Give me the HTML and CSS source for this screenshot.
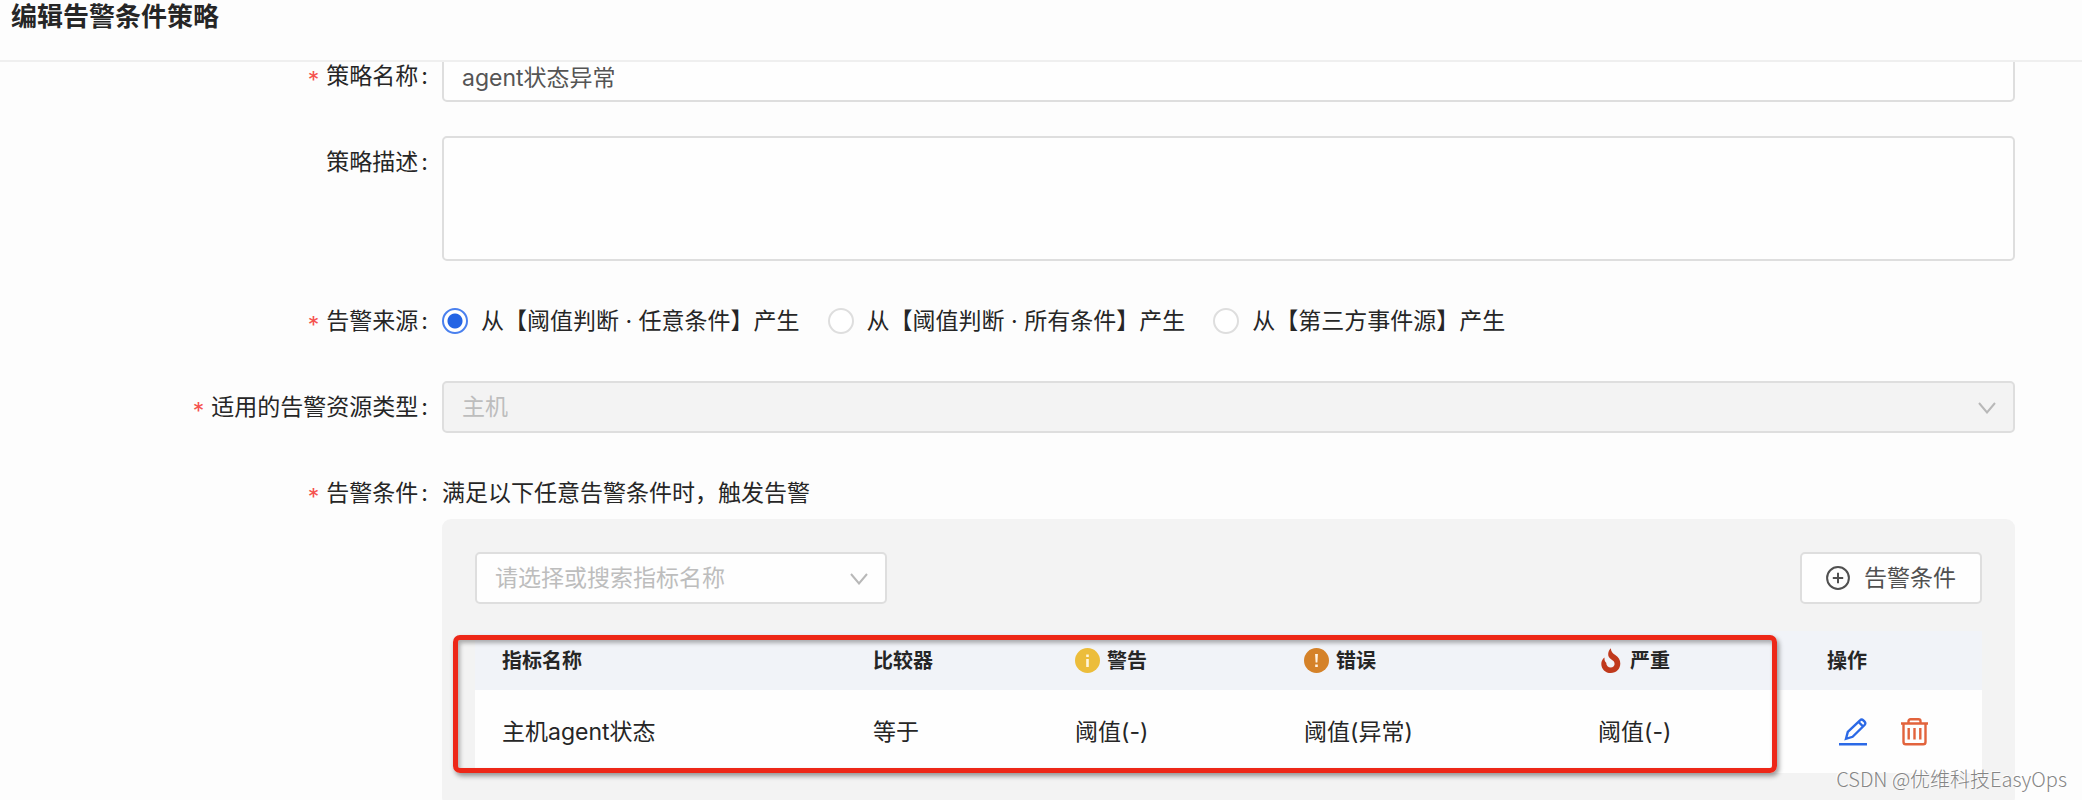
FILE: index.html
```html
<!DOCTYPE html>
<html lang="zh-CN">
<head>
<meta charset="utf-8">
<meta name="viewport" content="width=device-width, initial-scale=1">
<title>编辑告警条件策略</title>
<link rel="stylesheet" href="styles.css">
</head>
<body>
<header class="page-header">
  <h1 class="page-title">编辑告警条件策略</h1>
</header>
<main class="page-body">
  <form class="form">
    <div class="form-row">
      <label class="form-label required" for="name">策略名称</label>
      <input class="control" id="name" type="text" value="agent状态异常">
    </div>
    <div class="form-row">
      <label class="form-label" for="desc">策略描述</label>
      <textarea class="control control-area" id="desc"></textarea>
    </div>
    <div class="form-row" role="radiogroup" aria-labelledby="source-label">
      <span class="form-label required" id="source-label">告警来源</span>
      <div class="radio-group">
        <label class="radio"><input class="radio-input" type="radio" name="source" checked>从【阈值判断 · 任意条件】产生</label>
        <label class="radio"><input class="radio-input" type="radio" name="source">从【阈值判断 · 所有条件】产生</label>
        <label class="radio"><input class="radio-input" type="radio" name="source">从【第三方事件源】产生</label>
      </div>
    </div>
    <div class="form-row">
      <label class="form-label required" for="type">适用的告警资源类型</label>
      <div class="select">
        <select class="control" id="type" disabled><option>主机</option></select>
        <svg class="select-arrow" viewBox="0 0 18 12" aria-hidden="true"><path d="M1 1l8 9.500 8-9.500"/></svg>
      </div>
    </div>
    <div class="form-row">
      <span class="form-label required">告警条件</span>
      <div class="conditions">
        <p class="hint">满足以下任意告警条件时，触发告警</p>
        <section class="panel">
          <div class="toolbar">
            <div class="select metric-select">
              <select class="control placeholder" aria-label="指标名称"><option>请选择或搜索指标名称</option></select>
              <svg class="select-arrow" viewBox="0 0 18 12" aria-hidden="true"><path d="M1 1l8 9.500 8-9.500"/></svg>
            </div>
            <button class="add-button" type="button">
              <svg class="add-icon" viewBox="0 0 24 24" aria-hidden="true"><circle cx="12" cy="12" r="10.900"/><path d="M12 6.800v10.400M6.800 12h10.400"/></svg>
              告警条件
            </button>
          </div>
          <div class="table-wrap">
            <table class="table">
              <colgroup>
                <col class="col-name"><col class="col-op"><col class="col-warn"><col class="col-error"><col class="col-critical"><col class="col-actions">
              </colgroup>
              <thead>
                <tr>
                  <th>指标名称</th>
                  <th>比较器</th>
                  <th><span class="level"><svg class="level-icon" viewBox="0 0 25 25" aria-hidden="true"><circle cx="12.500" cy="12.500" r="12.500" fill="#ecbd3b"/><path fill="#fff6dc" d="M11.200 6.500h2.600v2.500h-2.600zM11.200 11h2.600v8h-2.600z"/></svg>警告</span></th>
                  <th><span class="level"><svg class="level-icon" viewBox="0 0 25 25" aria-hidden="true"><circle cx="12.500" cy="12.500" r="12.500" fill="#d58229"/><path fill="#fff3e2" d="M11.100 6h2.800l-.5 8.500h-1.800zM11.200 16.500h2.600v2.500h-2.600z"/></svg>错误</span></th>
                  <th><span class="level"><svg class="level-icon" viewBox="0 0 25 25" aria-hidden="true"><path fill="#c0391d" d="M12.800.2c.2 3.200 1.800 4.900 4.500 6.900 3.300 2.400 5 5 5 8.400 0 5.400-4.100 9.500-9.500 9.500S3.300 21 3.300 15.900c0-2.600 1-4.900 3.200-6.500-.1 2.500.3 4.200 1.700 5.300.1 3 2 4.800 4.500 4.800 2.200 0 3.900-1.600 3.900-3.500 0-2.300-1.300-3.300-3.200-4.500-2.300-1.400-3.400-3-3.200-5.700.2-2.300 1-4.200 2.600-5.600z"/></svg>严重</span></th>
                  <th>操作</th>
                </tr>
              </thead>
              <tbody>
                <tr>
                  <td>主机agent状态</td>
                  <td>等于</td>
                  <td>阈值(-)</td>
                  <td>阈值(异常)</td>
                  <td>阈值(-)</td>
                  <td>
                    <div class="actions">
                      <button class="icon-button edit" type="button" aria-label="编辑">
                        <svg viewBox="0 0 28 28" aria-hidden="true"><path d="M0 26.300h28M7 20.800l1.800-6.800L21 2.400c1-1 2.300-1 3.300 0l1.300 1.300c1 1 1 2.300 0 3.300L13.600 18.800zM19.600 4l4.600 4.600"/></svg>
                      </button>
                      <button class="icon-button delete" type="button" aria-label="删除">
                        <svg viewBox="0 0 28 28" aria-hidden="true"><path d="M0 5.500h27M7.500 5.500V3.200c0-1.200.8-1.900 2-1.900h8c1.200 0 2 .7 2 1.900v2.300M2.500 5.500v18.500c0 1.300.9 2.300 2.300 2.300h17.400c1.400 0 2.300-1 2.300-2.300V5.500M7.700 10v11.500M13.500 10v11.500M19.300 10v11.500"/></svg>
                      </button>
                    </div>
                  </td>
                </tr>
              </tbody>
            </table>
            <div class="highlight"></div>
          </div>
        </section>
      </div>
    </div>
  </form>
</main>
<div class="watermark">CSDN @优维科技EasyOps</div>
</body>
</html>
```
FILE: styles.css
```css
* {
  box-sizing: border-box;
}

body {
  margin: 0;
  height: 100vh;
  display: flex;
  flex-direction: column;
  overflow: hidden;
  background: #fdfdfd;
  color: #262626;
  font-family: Inter, "Noto Sans CJK SC", sans-serif;
  font-size: 23px;
  line-height: 32px;
}

.page-header {
  flex: none;
  padding: 0 11px 26px;
  border-bottom: 2px solid #efefef;
}

.page-title {
  margin: 0;
  font-size: 26px;
  font-weight: 600;
  line-height: 34px;
}

.page-body {
  flex: 1;
  min-height: 0;
  overflow: hidden;
}

/* The form is scrolled slightly under the header. */
.form {
  display: flex;
  flex-direction: column;
  gap: 34px;
  margin-top: -12px;
  padding-right: 67px;
}

.form-row {
  display: grid;
  grid-template-columns: 428px minmax(0, 1fr);
  column-gap: 14px;
  align-items: start;
}

.form-label {
  text-align: right;
  line-height: 52px;
}

.form-label::after {
  content: ":";
  margin-left: 3px;
}

.required::before {
  content: "*";
  margin-right: 7px;
  color: #f5524f;
  line-height: 1;
  vertical-align: -4px;
}

.control {
  display: block;
  width: 100%;
  height: 52px;
  padding: 0 18px;
  border: 2px solid #dedede;
  border-radius: 5px;
  background: #fefefe;
  color: #555;
  font: inherit;
  outline: none;
  appearance: none;
}

.control-area {
  height: 125px;
  padding: 8px 18px;
  resize: none;
}

.control:disabled {
  background: #f3f3f3;
  color: #bdbdbd;
  opacity: 1;
}

.placeholder {
  color: #bdbdbd;
}

.select {
  position: relative;
}

.select-arrow {
  position: absolute;
  top: 21px;
  right: 19px;
  width: 18px;
  height: 12px;
  fill: none;
  stroke: #b8b8b8;
  stroke-width: 2;
  pointer-events: none;
}

.radio-group {
  display: flex;
  gap: 28px;
}

.radio {
  display: flex;
  align-items: center;
  gap: 13px;
  line-height: 52px;
  white-space: nowrap;
}

.radio-input {
  flex: none;
  width: 26px;
  height: 26px;
  margin: 0;
  border: 2px solid #dedede;
  border-radius: 50%;
  background: #fff;
  appearance: none;
}

.radio-input:checked {
  border-color: #4a80ee;
  background: radial-gradient(circle, #2464e4 7px, #fff 8px);
}

.hint {
  margin: 0;
  line-height: 52px;
}

.panel {
  padding: 33px;
  border-radius: 9px;
  background: #f3f3f3;
}

.toolbar {
  display: flex;
  justify-content: space-between;
  margin-bottom: 27px;
}

.metric-select {
  width: 412px;
}

.add-button {
  display: flex;
  align-items: center;
  gap: 14px;
  height: 52px;
  padding: 0 24px;
  border: 2px solid #dedede;
  border-radius: 5px;
  background: #fefefe;
  color: #505050;
  font: inherit;
}

.add-icon {
  width: 24px;
  height: 24px;
  fill: none;
  stroke: #505050;
  stroke-width: 2;
}

.table-wrap {
  position: relative;
}

.table {
  width: 100%;
  border-collapse: collapse;
  table-layout: fixed;
}

.col-name { width: 371px; }
.col-op { width: 202px; }
.col-warn { width: 229px; }
.col-error { width: 294px; }
.col-critical { width: 229px; }

.table th,
.table td {
  padding: 0 0 0 27px;
  text-align: left;
}

.table th {
  height: 59px;
  background: #f1f3f8;
  font-size: 20px;
  font-weight: 600;
}

.table td {
  height: 83px;
  background: #fefefe;
}

.level {
  display: flex;
  align-items: center;
  gap: 7px;
}

.level-icon {
  width: 25px;
  height: 25px;
}

.actions {
  display: flex;
  gap: 34px;
  padding-left: 12px;
}

.icon-button {
  width: 28px;
  height: 28px;
  padding: 0;
  border: 0;
  background: none;
}

.icon-button svg {
  display: block;
  fill: none;
  stroke: currentColor;
  stroke-width: 2.400;
}

.edit {
  color: #2b69e6;
}

.delete {
  color: #e2633c;
}

.highlight {
  position: absolute;
  top: 4px;
  right: 205px;
  bottom: 0;
  left: -22px;
  border: 5px solid #ed2718;
  border-radius: 7px;
  box-shadow: 2px 3px 5px rgba(0, 0, 0, 0.4), inset 2px 3px 4px rgba(0, 0, 0, 0.3);
  pointer-events: none;
}

.watermark {
  position: absolute;
  right: 15px;
  bottom: 5px;
  color: #858585;
  font-family: "Noto Sans CJK SC", sans-serif;
  font-size: 20px;
  font-weight: 300;
  text-shadow: -1px -1px 0 #fff;
}
```
